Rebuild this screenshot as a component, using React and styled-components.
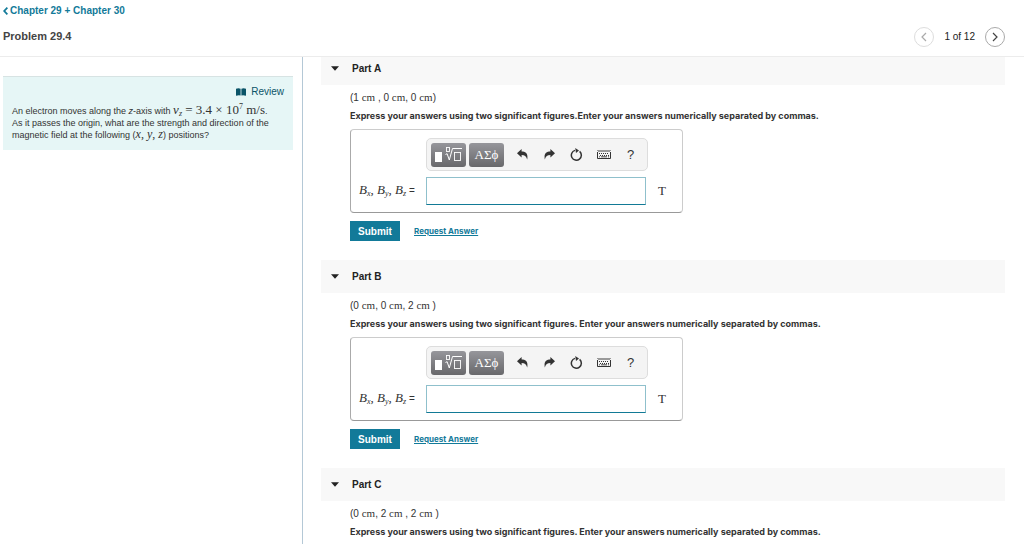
import React from "react";
import styled, { createGlobalStyle } from "styled-components";

const Global = createGlobalStyle`
  * { box-sizing: border-box; }
  body {
    margin: 0;
    background: #fff;
    color: #333;
    font-family: "Liberation Sans", Arial, sans-serif;
    font-size: 9px;
  }
  button, input { font-family: inherit; }
`;

const Page = styled.div`
  display: flex;
  flex-direction: column;
  height: 100vh;
  overflow: hidden;
`;

const Header = styled.header`
  display: flex;
  justify-content: space-between;
  align-items: flex-end;
  flex: none;
  padding: 4px 19px 9px 3px;
  border-bottom: 1px solid #ececec;
`;

const BackLink = styled.a`
  display: flex;
  align-items: center;
  gap: 2px;
  color: #127a99;
  font-size: 10px;
  line-height: 14px;
  font-weight: bold;
  text-decoration: none;
`;

const Title = styled.h1`
  margin: 11px 0 3px;
  color: #444;
  font-size: 11px;
  line-height: 15px;
`;

const Pager = styled.nav`
  display: flex;
  align-items: center;
  gap: 10px;
  font-size: 10px;
  line-height: 20px;
  color: #222;
`;

const PageButton = styled.button`
  display: grid;
  place-items: center;
  width: 20px;
  height: 20px;
  padding: 0;
  border: 1px solid ${(p) => (p.disabled ? "#ddd" : "#aaa")};
  border-radius: 50%;
  background: #fff;
  color: ${(p) => (p.disabled ? "#aaa" : "#444")};
`;

const Body = styled.div`
  display: flex;
  flex: 1;
  min-height: 0;
`;

const Aside = styled.aside`
  flex: 0 0 303px;
  padding: 19px 9px 0 3px;
  border-right: 1px solid #b4c8d6;
`;

const Prompt = styled.section`
  padding: 8px 9px 9px;
  border-top: 1px solid #d7e3e3;
  background: #e6f6f6;
`;

const Review = styled.a`
  display: flex;
  justify-content: flex-end;
  align-items: center;
  gap: 5px;
  color: #0b5468;
  font-size: 10px;
  line-height: 14px;
  text-decoration: none;
`;

const PromptText = styled.p`
  margin: 6px 0 0;
  line-height: 12px;
  white-space: nowrap;
`;

const Math = styled.span`
  font-family: "Liberation Serif", "Times New Roman", serif;
  font-size: ${(p) => p.$size || 11}px;
  line-height: 0;
  sub, sup { font-size: 8px; line-height: 0; }
  sub { vertical-align: -2px; }
`;

const Main = styled.main`
  flex: 1;
  min-width: 0;
  overflow: hidden;
  padding: 0 19px 0 18px;
`;

const Parts = styled.div`
  margin-top: -5px;
`;

const PartHeader = styled.h2`
  display: flex;
  align-items: center;
  gap: 13px;
  height: 33px;
  margin: 0;
  padding-left: 10px;
  background: #f8f8f8;
  color: #222;
  font-size: 10px;
`;

const PartBody = styled.div`
  padding: 6px 0 19px 29px;
`;

const Line = styled.p`
  margin: 0 0 4px;
  font-size: 10px;
  line-height: 14px;
`;

const Instruction = styled.p`
  margin: 0 0 6px;
  font-family: Inter, "Liberation Sans", sans-serif;
  font-size: 9px;
  line-height: 14px;
  font-weight: bold;
`;

const AnswerBox = styled.div`
  display: inline-grid;
  grid-template-columns: 57px 222px 24px;
  column-gap: 10px;
  row-gap: 6px;
  align-items: center;
  padding: 8px 0 7px 8px;
  border: 1px solid #ccc;
  border-left-color: #aaa;
  border-bottom-color: #999;
  border-radius: 4px;
  vertical-align: top;
`;

const Toolbar = styled.div`
  grid-column: 2;
  display: flex;
  align-items: center;
  height: 33px;
  padding-left: 4px;
  border: 1px solid #ddd;
  border-radius: 5px;
  background: #f4f4f4;
`;

const DarkButton = styled.button`
  display: grid;
  place-items: center;
  width: 35px;
  height: 24px;
  margin-right: 3px;
  padding: 0;
  border: 0;
  border-radius: 3px;
  background: linear-gradient(#96969b, #68686b);
  color: #fff;
  font-family: "Liberation Serif", serif;
  font-size: 13px;
`;

const Tools = styled.div`
  display: flex;
  margin-left: 2px;
`;

const ToolButton = styled.button`
  display: grid;
  place-items: center;
  width: 27px;
  height: 24px;
  padding: 0;
  border: 0;
  background: none;
  color: #333;
  font-size: 13px;
`;

const Label = styled.label`
  grid-column: 1;
  font-size: 10px;
  line-height: 14px;
  white-space: nowrap;
`;

const Unit = styled.span`
  font-family: "Liberation Serif", "Times New Roman", serif;
  font-size: 13px;
  line-height: 14px;
`;

const AnswerInput = styled.input`
  width: 220px;
  height: 28px;
  padding: 0 6px;
  border: 1px solid #8fc0cc;
  border-bottom-color: #127a96;
  background: #fff;
  font-size: 11px;
`;

const Actions = styled.div`
  display: flex;
  align-items: center;
  gap: 14px;
  margin-top: 8px;
`;

const Submit = styled.button`
  width: 50px;
  height: 20px;
  padding: 0;
  border: 0;
  background: #127a99;
  color: #fff;
  font-size: 10px;
  font-weight: bold;
`;

const RequestLink = styled.a`
  color: #127a99;
  font-family: Inter, "Liberation Sans", sans-serif;
  font-size: 8px;
  line-height: 12px;
  font-weight: bold;
`;

const Chevron = ({ right }) => (
  <svg width="8" height="10" viewBox="0 0 8 10" fill="none" stroke="currentColor" strokeWidth="1.2">
    <path d={right ? "M2 1l4 4-4 4" : "M6 1L2 5l4 4"} />
  </svg>
);

const BackIcon = () => (
  <svg width="5" height="8" viewBox="0 0 5 8" fill="none" stroke="currentColor" strokeWidth="1.8">
    <path d="M4.4.6L1.2 4l3.2 3.4" />
  </svg>
);

const BookIcon = () => (
  <svg width="10" height="8" viewBox="0 0 10 8" fill="currentColor">
    <path d="M0 .8Q2.4-.4 4.6.8V7.4Q2.4 6.8 0 7.8zM5.4.8Q7.6-.4 10 .8V7.8Q7.6 6.8 5.4 7.4z" />
  </svg>
);

const Caret = () => (
  <svg width="8" height="5" viewBox="0 0 8 5" fill="#222">
    <path d="M0 .3h8L4 4.7z" />
  </svg>
);

const RootIcon = () => (
  <svg width="27" height="17" viewBox="0 0 27 17" fill="none" stroke="#fff">
    <rect x="0" y="6" width="7" height="10" fill="#fff" stroke="none" />
    <rect x="11.5" y="1.5" width="3" height="4" strokeWidth=".9" />
    <path d="M10.5 8.5l1.6-.8 2.2 6.3L17.5 2.5h9.5" strokeWidth="1" />
    <rect x="19.5" y="6.5" width="6" height="8" strokeWidth=".9" />
  </svg>
);

const ArrowIcon = ({ forward }) => (
  <svg width="11" height="11" viewBox="0 0 11 11" fill="currentColor">
    <path
      transform={forward ? "translate(11 0) scale(-1 1)" : undefined}
      d="M0 4.2L4.6 0v2.5c4.4 0 6.6 2 5.6 8C9.4 7.4 7.6 6 4.6 6v2.4z"
    />
  </svg>
);

const ResetIcon = () => (
  <svg width="13" height="13" viewBox="0 0 13 13" fill="none" stroke="currentColor" strokeWidth="1.5">
    <path d="M9.6 3.4A5 5 0 1 1 5 2.4" />
    <path d="M5.2 0L9 2.4 6 5z" fill="currentColor" stroke="none" />
  </svg>
);

const KeyboardIcon = () => (
  <svg width="14" height="9" viewBox="0 0 14 9" fill="none" stroke="currentColor">
    <path d="M.5 2v6.5h13V2" />
    <path d="M0 .5h14M1 1.5h12" stroke="#999" />
    <path d="M2 3.5h10M3 5.5h9" strokeDasharray="1 1" />
    <path d="M2 6.8h1M4 6.8h6M11 6.8h1" strokeWidth=".9" />
  </svg>
);

const Cm = () => <Math>cm</Math>;

const parts = [
  { id: "A", line: <>(1 <Cm /> , 0 <Cm />, 0 <Cm />)</>, join: "", open: true },
  { id: "B", line: <>(0 <Cm />, 0 <Cm />, 2 <Cm /> )</>, join: " ", open: true },
  { id: "C", line: <>(0 <Cm />, 2 <Cm /> , 2 <Cm /> )</>, join: " ", open: false },
];

const AnswerForm = ({ id }) => (
  <>
    <AnswerBox>
      <Toolbar>
        <DarkButton aria-label="Templates"><RootIcon /></DarkButton>
        <DarkButton>ΑΣϕ</DarkButton>
        <Tools>
          <ToolButton aria-label="Undo"><ArrowIcon /></ToolButton>
          <ToolButton aria-label="Redo"><ArrowIcon forward /></ToolButton>
          <ToolButton aria-label="Reset"><ResetIcon /></ToolButton>
          <ToolButton aria-label="Keyboard"><KeyboardIcon /></ToolButton>
          <ToolButton>?</ToolButton>
        </Tools>
      </Toolbar>
      <Label htmlFor={`answer-${id}`}>
        <Math $size={13}>
          <i>B<sub>x</sub></i>, <i>B<sub>y</sub></i>, <i>B<sub>z</sub></i>
        </Math>{" "}=
      </Label>
      <AnswerInput id={`answer-${id}`} type="text" />
      <Unit>T</Unit>
    </AnswerBox>
    <Actions>
      <Submit>Submit</Submit>
      <RequestLink href="#request">Request Answer</RequestLink>
    </Actions>
  </>
);

const Part = ({ id, line, join, open }) => (
  <section>
    <PartHeader><Caret />Part {id}</PartHeader>
    <PartBody>
      <Line>{line}</Line>
      <Instruction>
        {`Express your answers using two significant figures.${join}Enter your answers numerically separated by commas.`}
      </Instruction>
      {open && <AnswerForm id={id} />}
    </PartBody>
  </section>
);

export default function App() {
  return (
    <Page>
      <Global />
      <Header>
        <div>
          <BackLink href="#chapter"><BackIcon />Chapter 29 + Chapter 30</BackLink>
          <Title>Problem 29.4</Title>
        </div>
        <Pager aria-label="Problems">
          <PageButton disabled aria-label="Previous"><Chevron /></PageButton>
          <span>1 of 12</span>
          <PageButton aria-label="Next"><Chevron right /></PageButton>
        </Pager>
      </Header>
      <Body>
        <Aside>
          <Prompt>
            <Review href="#review"><BookIcon />Review</Review>
            <PromptText>
              An electron moves along the <i>z</i>-axis with{" "}
              <Math $size={13}><i>v<sub>z</sub></i> = 3.4 × 10<sup>7</sup> m/s</Math>.<br />
              As it passes the origin, what are the strength and direction of the<br />
              magnetic field at the following (<Math $size={12}><i>x</i>, <i>y</i>, <i>z</i></Math>) positions?
            </PromptText>
          </Prompt>
        </Aside>
        <Main>
          <Parts>
            {parts.map((p) => <Part key={p.id} {...p} />)}
          </Parts>
        </Main>
      </Body>
    </Page>
  );
}
